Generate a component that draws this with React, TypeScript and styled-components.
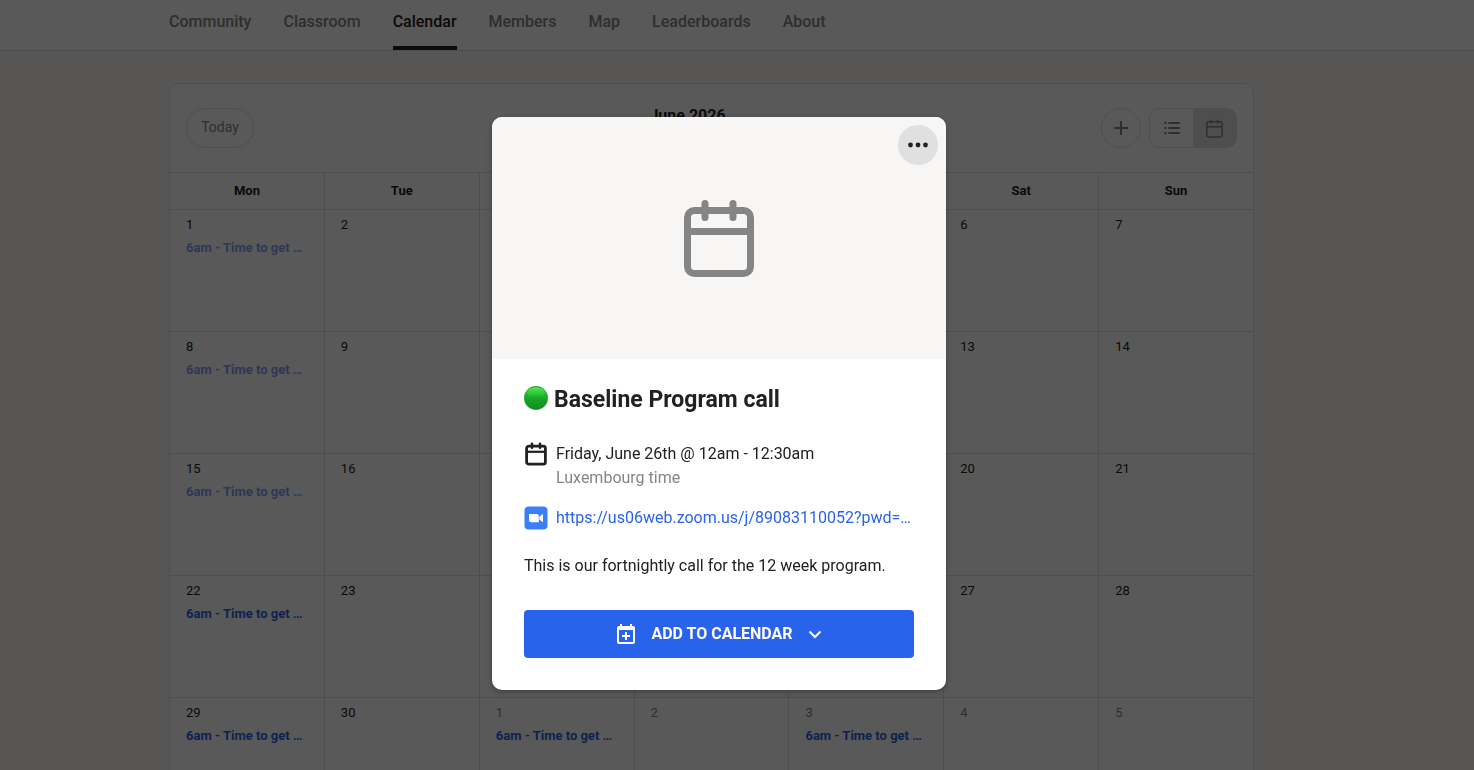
import React from "react";
import styled, { createGlobalStyle } from "styled-components";

const GlobalStyle = createGlobalStyle`
  *, *::before, *::after { box-sizing: border-box; }
  html, body { margin: 0; height: 100%; }
  body {
    overflow: hidden;
    background: #f8f7f2;
    color: #202124;
    font-family: Roboto, "Liberation Sans", sans-serif;
    font-size: 16px;
    line-height: 24px;
  }
  button { font: inherit; color: inherit; padding: 0; cursor: pointer; }
  a { color: inherit; text-decoration: none; }
  svg { display: block; flex: none; }
`;

const TopBar = styled.header`
  background: #fff;
  border-bottom: 1px solid #dcdcdc;
  padding-right: 51px;
`;

const Container = styled.div`
  width: 100%;
  max-width: 1085px;
  margin: 0 auto;
`;

const Nav = styled.nav`
  display: flex;
  gap: 32px;
`;

const NavLink = styled.a<{ $active?: boolean }>`
  height: 50px;
  padding-top: 10px;
  font-weight: 500;
  color: ${(p) => (p.$active ? "#202124" : "#858585")};
  border-bottom: 4px solid ${(p) => (p.$active ? "#202124" : "transparent")};
`;

const Main = styled.main`
  padding: 32px 51px 32px 0;
`;

const Card = styled.section`
  background: #fff;
  border: 1px solid #dfdfdf;
  border-radius: 10px;
  overflow: hidden;
`;

const CardHeader = styled.div`
  display: flex;
  align-items: center;
  height: 88px;
  padding: 0 16px;
`;

const MonthTitle = styled.h1`
  flex: 1;
  align-self: flex-start;
  margin: 0;
  padding: 20px 0 0 20px;
  text-align: center;
  font-size: 16px;
  font-weight: 700;
`;

const TodayButton = styled.button`
  width: 68px;
  height: 40px;
  padding-bottom: 2px;
  border: 1px solid #dfdfdf;
  border-radius: 20px;
  background: #fff;
  color: #858585;
  font-size: 14px;
`;

const AddButton = styled.button`
  display: flex;
  align-items: center;
  justify-content: center;
  width: 40px;
  height: 40px;
  margin-right: 8px;
  border: 1px solid #dfdfdf;
  border-radius: 50%;
  background: #fff;
  color: #858585;
`;

const ViewToggle = styled.div`
  display: flex;
  width: 88px;
  height: 40px;
  border: 1px solid #dfdfdf;
  border-radius: 10px;
  overflow: hidden;
`;

const ViewButton = styled.button<{ $active?: boolean }>`
  flex: 1;
  display: flex;
  align-items: center;
  justify-content: center;
  border: 0;
  background: ${(p) => (p.$active ? "#dfdfdf" : "#fff")};
  color: #858585;
`;

const MonthTable = styled.table`
  width: 100%;
  table-layout: fixed;
  border-collapse: separate;
  border-spacing: 0;
  font-size: 13px;
  line-height: 20px;
`;

const Weekday = styled.th`
  width: 14.3%;
  height: 38px;
  padding: 0;
  border: 0 solid #dfdfdf;
  border-width: 1px 1px 1px 0;
  font-weight: 700;
  text-align: center;
  &:last-child { width: auto; border-right-width: 0; }
`;

const DayCell = styled.td<{ $outside: boolean }>`
  height: 122px;
  padding: 5px 16px;
  border: 0 solid #dfdfdf;
  border-width: 0 1px 1px 0;
  vertical-align: top;
  color: ${(p) => (p.$outside ? "#858585" : "#202124")};
  &:last-child { border-right-width: 0; }
`;

const EventLink = styled.a<{ $past: boolean }>`
  display: block;
  margin-top: 3px;
  font-weight: 700;
  white-space: nowrap;
  color: #2a63eb;
  opacity: ${(p) => (p.$past ? 0.6 : 1)};
`;

const Overlay = styled.div`
  position: fixed;
  inset: 0;
  display: flex;
  align-items: flex-start;
  justify-content: center;
  padding: 117px 36px 32px 0;
  background: rgba(0, 0, 0, 0.65);
`;

const Dialog = styled.div`
  width: 454px;
  border-radius: 10px;
  overflow: hidden;
  background: #fff;
  box-shadow: 0 2px 6px rgba(0, 0, 0, 0.3);
`;

const Cover = styled.div`
  position: relative;
  display: flex;
  align-items: center;
  justify-content: center;
  height: 242px;
  background: #f7f6f5;
  color: #858585;
`;

const MoreButton = styled.button`
  position: absolute;
  top: 8px;
  right: 8px;
  display: flex;
  align-items: center;
  justify-content: center;
  width: 40px;
  height: 40px;
  border: 0;
  border-radius: 50%;
  background: #e0e0e0;
  color: #202124;
`;

const DialogBody = styled.div`
  padding: 24px 32px 32px;
`;

const DialogTitle = styled.h2`
  display: flex;
  gap: 6px;
  margin: 0 0 25px;
  font-size: 23px;
  line-height: 34px;
  font-weight: 700;
`;

const TitleIcon = styled.span`
  padding-top: 3px;
`;

const InfoRow = styled.div`
  display: flex;
  gap: 8px;
  margin-bottom: 16px;
`;

const IconSlot = styled.span`
  display: flex;
  align-items: center;
  justify-content: center;
  width: 24px;
  height: 24px;
`;

const Timezone = styled.div`
  color: #858585;
`;

const MeetingLink = styled.a`
  color: #2a63eb;
`;

const Description = styled.p`
  margin: 24px 0 32px;
`;

const PrimaryButton = styled.button`
  display: flex;
  align-items: center;
  justify-content: center;
  gap: 15px;
  width: 100%;
  height: 48px;
  border: 0;
  border-radius: 4px;
  background: #2a63eb;
  color: #fff;
  font-weight: 700;
`;

const CalendarIcon = ({ width, height, stroke = 2 }: { width: number; height: number; stroke?: number }) => (
  <svg width={width} height={height} viewBox="0 0 20 22" fill="none" stroke="currentColor" strokeWidth={stroke} overflow="visible" aria-hidden="true">
    <rect x="1" y="3" width="18" height="18" rx="2" />
    <path d="M1 9h18" />
    <path d="M6 1v4M14 1v4" strokeLinecap="round" />
  </svg>
);

const BoldCalendarIcon = () => (
  <svg width="24" height="24" viewBox="0 0 24 24" fill="none" stroke="currentColor" strokeWidth="2.8" aria-hidden="true">
    <rect x="2.6" y="4.2" width="18.8" height="18" rx="2.2" />
    <path d="M2.6 9.8h18.8" strokeWidth="2.2" />
    <path d="M8 1.8v4M16 1.8v4" strokeLinecap="round" strokeWidth="2.6" />
  </svg>
);

const PlusIcon = () => (
  <svg width="14" height="14" viewBox="0 0 14 14" fill="none" stroke="currentColor" strokeWidth="2" aria-hidden="true">
    <path d="M7 0v14M0 7h14" />
  </svg>
);

const ListIcon = () => (
  <svg width="16" height="14" viewBox="0 0 16 14" fill="none" stroke="currentColor" strokeLinecap="round" aria-hidden="true">
    <path d="M5 2h10M5 7h10M5 12h10" strokeWidth="1.9" />
    <path d="M1.3 2h.1M1.3 7h.1M1.3 12h.1" strokeWidth="2.4" />
  </svg>
);

const DotsIcon = () => (
  <svg width="20" height="6" viewBox="0 0 20 6" fill="currentColor" aria-hidden="true">
    <circle cx="2.5" cy="3" r="2.4" />
    <circle cx="10" cy="3" r="2.4" />
    <circle cx="17.5" cy="3" r="2.4" />
  </svg>
);

const GreenCircle = () => (
  <svg width="24" height="24" viewBox="0 0 24 24" aria-hidden="true">
    <defs>
      <linearGradient id="ball" x1="0" y1="0" x2="0" y2="1">
        <stop offset="0" stopColor="#1fa52a" />
        <stop offset="0.25" stopColor="#27c22f" />
        <stop offset="0.5" stopColor="#17a827" />
        <stop offset="1" stopColor="#158a21" />
      </linearGradient>
      <linearGradient id="shine" x1="0" y1="0" x2="0" y2="1">
        <stop offset="0" stopColor="#5eea5a" />
        <stop offset="1" stopColor="#2bcb32" stopOpacity="0" />
      </linearGradient>
    </defs>
    <circle cx="12" cy="12" r="11.8" fill="url(#ball)" stroke="#128a1e" strokeWidth="0.4" />
    <ellipse cx="12" cy="6.6" rx="9" ry="5.4" fill="url(#shine)" />
  </svg>
);

const ZoomIcon = () => (
  <svg width="24" height="24" viewBox="0 0 24 24" aria-hidden="true">
    <rect x="0.5" y="0.5" width="23" height="23" rx="4" fill="#3b7ff8" />
    <path d="M5 8h7.8a2 2 0 0 1 2 2v6.2H7a2 2 0 0 1-2-2z" fill="#fff" />
    <path d="M15.3 10.8 19 8v8.2l-3.7-2.8z" fill="#fff" />
  </svg>
);

const CalendarAddIcon = () => (
  <svg width="20" height="20" viewBox="0 0 20 20" fill="none" stroke="currentColor" strokeWidth="2" aria-hidden="true">
    <rect x="2" y="3" width="16" height="16" rx="1" />
    <path d="M2 4.5h16" strokeWidth="3" />
    <path d="M5 0v3M15 0v3M10 8v8M6 12h8" />
  </svg>
);

const ChevronIcon = () => (
  <svg width="14" height="14" viewBox="0 0 14 14" fill="none" stroke="currentColor" strokeWidth="2" aria-hidden="true">
    <path d="M1.5 4.5 7 10l5.5-5.5" />
  </svg>
);

const tabs = ["Community", "Classroom", "Calendar", "Members", "Map", "Leaderboards", "About"];
const weekdays = ["Mon", "Tue", "Wed", "Thu", "Fri", "Sat", "Sun"];
const eventIndexes = [0, 7, 14, 21, 28, 30, 32];

const days = Array.from({ length: 35 }, (_, i) => ({
  label: i < 30 ? i + 1 : i - 29,
  outside: i >= 30,
  past: i < 21,
  hasEvent: eventIndexes.includes(i),
}));
const weeks = [0, 1, 2, 3, 4].map((w) => days.slice(w * 7, w * 7 + 7));

export default function App() {
  return (
    <>
      <GlobalStyle />
      <TopBar>
        <Container>
          <Nav>
            {tabs.map((tab) => (
              <NavLink key={tab} href="#" $active={tab === "Calendar"}>
                {tab}
              </NavLink>
            ))}
          </Nav>
        </Container>
      </TopBar>
      <Main>
        <Container>
          <Card>
            <CardHeader>
              <TodayButton type="button">Today</TodayButton>
              <MonthTitle>June 2026</MonthTitle>
              <AddButton type="button" aria-label="Add event">
                <PlusIcon />
              </AddButton>
              <ViewToggle>
                <ViewButton type="button" aria-label="List view">
                  <ListIcon />
                </ViewButton>
                <ViewButton type="button" aria-label="Month view" $active>
                  <CalendarIcon width={17} height={19} stroke={1.7} />
                </ViewButton>
              </ViewToggle>
            </CardHeader>
            <MonthTable>
              <thead>
                <tr>
                  {weekdays.map((d) => (
                    <Weekday key={d} scope="col">
                      {d}
                    </Weekday>
                  ))}
                </tr>
              </thead>
              <tbody>
                {weeks.map((week, w) => (
                  <tr key={w}>
                    {week.map((day) => (
                      <DayCell key={day.label} $outside={day.outside}>
                        {day.label}
                        {day.hasEvent && (
                          <EventLink href="#" $past={day.past}>
                            6am - Time to get …
                          </EventLink>
                        )}
                      </DayCell>
                    ))}
                  </tr>
                ))}
              </tbody>
            </MonthTable>
          </Card>
        </Container>
      </Main>
      <Overlay>
        <Dialog role="dialog" aria-modal="true" aria-labelledby="event-title">
          <Cover>
            <CalendarIcon width={70} height={77} />
            <MoreButton type="button" aria-label="More options">
              <DotsIcon />
            </MoreButton>
          </Cover>
          <DialogBody>
            <DialogTitle id="event-title">
              <TitleIcon>
                <GreenCircle />
              </TitleIcon>
              Baseline Program call
            </DialogTitle>
            <InfoRow>
              <IconSlot>
                <BoldCalendarIcon />
              </IconSlot>
              <div>
                <div>Friday, June 26th @ 12am - 12:30am</div>
                <Timezone>Luxembourg time</Timezone>
              </div>
            </InfoRow>
            <InfoRow>
              <IconSlot>
                <ZoomIcon />
              </IconSlot>
              <MeetingLink href="#">https://us06web.zoom.us/j/89083110052?pwd=…</MeetingLink>
            </InfoRow>
            <Description>This is our fortnightly call for the 12 week program.</Description>
            <PrimaryButton type="button">
              <CalendarAddIcon />
              ADD TO CALENDAR
              <ChevronIcon />
            </PrimaryButton>
          </DialogBody>
        </Dialog>
      </Overlay>
    </>
  );
}
